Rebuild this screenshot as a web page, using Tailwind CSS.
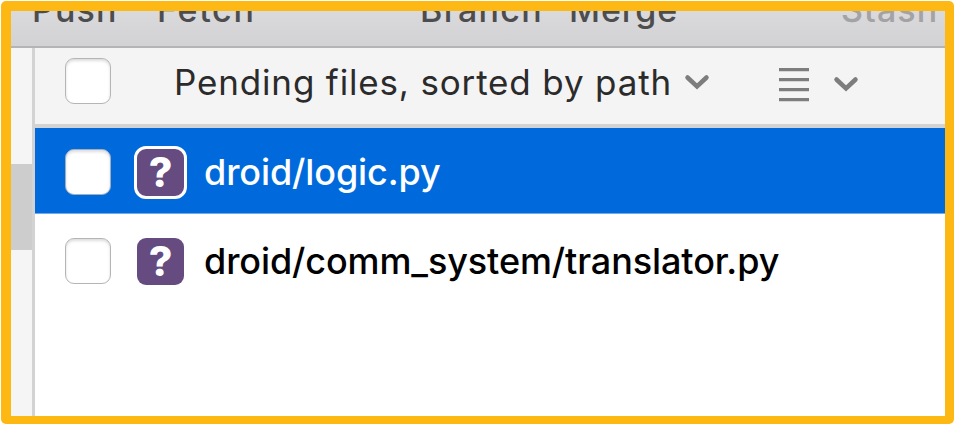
<!DOCTYPE html>
<html lang="en">
<head>
<meta charset="utf-8">
<title>Pending files</title>
<script src="https://cdn.jsdelivr.net/npm/@tailwindcss/browser@4"></script>
</head>
<body class="bg-white overflow-hidden">
<div class="w-[954px] h-[424px] pt-px pl-px font-['Inter','Liberation_Sans',sans-serif]">
  <div class="w-[953px] h-[423px] bg-[#fdb813] rounded-[5px] pt-[10px] pl-[10px] pr-[9px] pb-[8px]">
    <div class="w-[934px] h-[405px] bg-white overflow-hidden flex flex-col">
      <header class="h-[37px] shrink-0 overflow-hidden bg-linear-to-b from-[#dad9db] to-[#d2d1d4] border-b-2 border-[#b4b3b6] text-[34px] leading-[40px] font-medium text-[#4d4d4f] whitespace-nowrap">
        <nav class="flex -mt-[21px] pl-[21px] tracking-[1.1px]">
          <span class="w-[125px]">Push</span>
          <span class="w-[263px] tracking-[1.7px]">Fetch</span>
          <span class="w-[149px] tracking-[1.3px]">Branch</span>
          <span class="w-[272px] tracking-[0.9px]">Merge</span>
          <span class="text-[#a3a2a5]">Stash</span>
        </nav>
      </header>
      <div class="flex grow min-h-0">
        <aside class="w-[21px] shrink-0 bg-[#f5f5f5] pt-[116px]"><div class="h-[86px] bg-[#cdcdcd]"></div></aside>
        <main class="grow border-l-[3px] border-[#d3d3d3]">
          <div class="h-[80px] bg-[#f4f4f4] border-b-[4px] border-[#d3d3d3] flex items-start pl-[30px] pt-[10px]">
            <div class="size-[46px] shrink-0 rounded-[9px] bg-white border border-[#b5b5b5] shadow-[inset_0_2px_3px_#dddddd]"></div>
            <div class="w-[510px] shrink-0 ml-[63px] mt-px text-[35px] leading-[46px] text-[#2b2b2b] whitespace-nowrap"><span class="tracking-[0.84px]">Pending files, sorted by path</span></div>
            <svg class="w-[26px] h-[18px] mt-[16px] shrink-0" viewBox="0 0 26 18" fill="none" stroke="#7d7d7d" stroke-width="4.5"><path d="M3.5 3.5 13 12.5 22.5 3.5" stroke-linecap="round"/></svg>
            <svg class="w-[30px] h-[35px] ml-[69px] mt-[10px] shrink-0" viewBox="0 0 30 35" fill="#7d7d7d"><path d="M0 0H30V3.3H0ZM0 10H30V13.3H0ZM0 20H30V23.3H0ZM0 30H30V33.3H0Z"/></svg>
            <svg class="w-[26px] h-[18px] ml-[24px] mt-[18px] shrink-0" viewBox="0 0 26 18" fill="none" stroke="#7d7d7d" stroke-width="4.5"><path d="M3.5 3.5 13 12.5 22.5 3.5" stroke-linecap="round"/></svg>
          </div>
          <div class="h-[86px] bg-[#006adc] border-b border-[#6fabeb] flex pl-[30px] text-white">
            <div class="mt-[21px] size-[46px] shrink-0 rounded-[9px] bg-white border border-[#9dafc5] shadow-[inset_0_2px_3px_#dddddd]"></div>
            <div class="ml-[23px] mt-[18px] size-[53px] shrink-0 rounded-[12px] bg-[#664b80] border-[3px] border-white flex items-center justify-center font-extrabold text-[41px] leading-[46px] pb-[2px]">?</div>
            <span class="ml-[17px] mt-[21px] text-[36px] leading-[46px] font-medium whitespace-nowrap tracking-[-0.1px]">droid/logic.py</span>
          </div>
          <div class="h-[87px] bg-white flex pl-[30px] text-black">
            <div class="mt-[24px] size-[46px] shrink-0 rounded-[9px] bg-white border border-[#b5b5b5] shadow-[inset_0_2px_3px_#dddddd]"></div>
            <div class="ml-[26px] mt-[24px] size-[47px] shrink-0 rounded-[9px] bg-[#664b80] text-white flex items-center justify-center font-extrabold text-[41px] leading-[46px] pb-[2px]">?</div>
            <span class="ml-[20px] mt-[24px] text-[36px] leading-[46px] font-medium whitespace-nowrap tracking-[-0.1px]">droid/comm_system/translator.py</span>
          </div>
        </main>
      </div>
    </div>
  </div>
</div>
</body>
</html>
